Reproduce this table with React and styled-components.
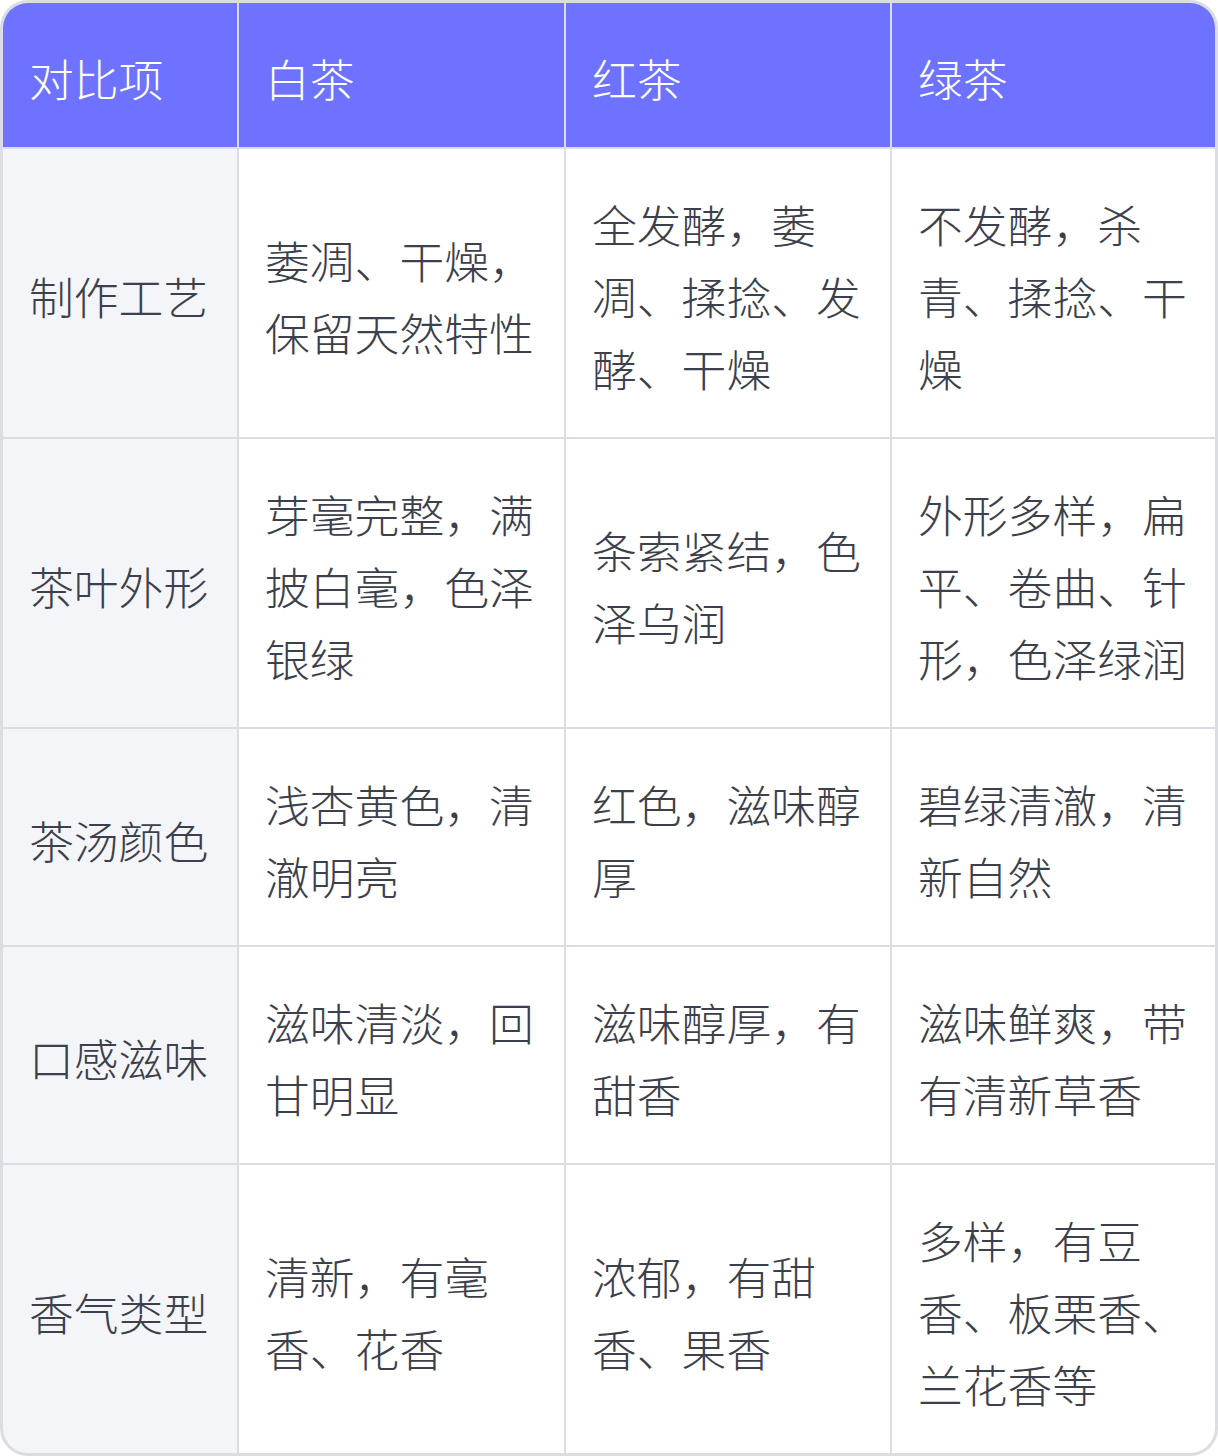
import React from "react";
import styled, { createGlobalStyle } from "styled-components";

const Global = createGlobalStyle`
  html, body { margin: 0; padding: 0; background: #ffffff; }
  body { font-family: "Noto Sans CJK SC", "Noto Sans", sans-serif; }
`;

const Table = styled.div`
  width: 1218px;
  box-sizing: border-box;
  display: grid;
  grid-template-columns: 234px 325px 324px 323px;
  gap: 2px;
  background: #dcdde3;
  border: 3px solid #dcdde3;
  border-radius: 28px;
  overflow: hidden;
`;

const Cell = styled.div`
  box-sizing: border-box;
  display: flex;
  align-items: center;
  padding: 39px 28px 33px 26px;
  font-size: 44.8px;
  line-height: 72px;
  font-weight: 300;
  color: ${(p) => (p.$head ? "#ffffff" : "#3c3f4c")};
  background: ${(p) => (p.$head ? "#6e73ff" : p.$label ? "#f4f5f9" : "#ffffff")};
  line-break: strict;
  word-break: normal;
`;

const Text = styled.span`
  display: block;
  width: 100%;
`;

const headers = ["对比项", "白茶", "红茶", "绿茶"];
const rows = [
  ["制作工艺", "萎凋、干燥，保留天然特性", "全发酵，萎凋、揉捻、发酵、干燥", "不发酵，杀青、揉捻、干燥"],
  ["茶叶外形", "芽毫完整，满披白毫，色泽银绿", "条索紧结，色泽乌润", "外形多样，扁平、卷曲、针形，色泽绿润"],
  ["茶汤颜色", "浅杏黄色，清澈明亮", "红色，滋味醇厚", "碧绿清澈，清新自然"],
  ["口感滋味", "滋味清淡，回甘明显", "滋味醇厚，有甜香", "滋味鲜爽，带有清新草香"],
  ["香气类型", "清新，有毫香、花香", "浓郁，有甜香、果香", "多样，有豆香、板栗香、兰花香等"],
];

export default function App() {
  return (
    <>
      <Global />
      <Table>
        {headers.map((h) => (
          <Cell key={h} $head>
            <Text>{h}</Text>
          </Cell>
        ))}
        {rows.map((r) =>
          r.map((c, i) => (
            <Cell key={r[0] + i} $label={i === 0}>
              <Text>{c}</Text>
            </Cell>
          ))
        )}
      </Table>
    </>
  );
}
